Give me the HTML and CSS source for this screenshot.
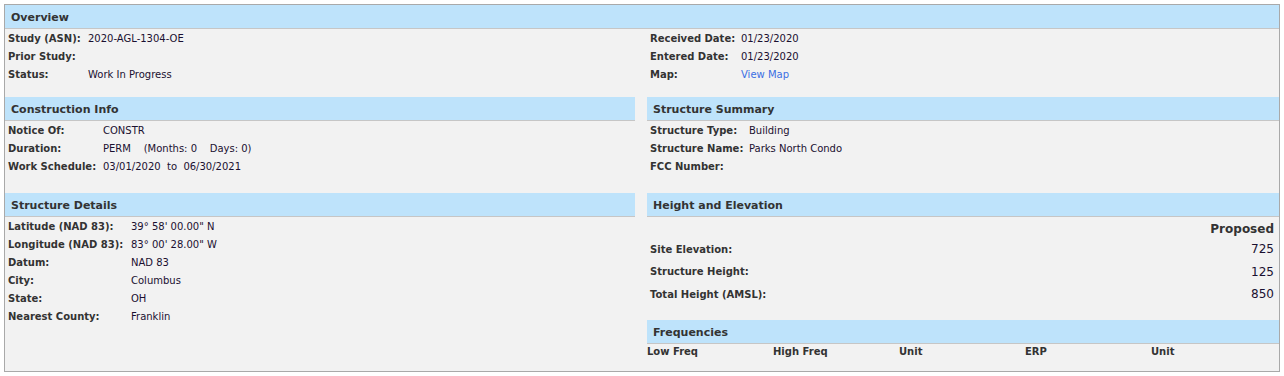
FILE: index.html
```html
<!DOCTYPE html>
<html>
<head>
<meta charset="utf-8">
<link rel="stylesheet" href="styles.css">
</head>
<body>
<div class="panel">
  <div class="hdr">Overview</div>
  <div class="overview">
    <div class="rows l80">
      <div class="row"><span class="lbl">Study (ASN):</span><span class="val">2020-AGL-1304-OE</span></div>
      <div class="row"><span class="lbl">Prior Study:</span><span class="val"></span></div>
      <div class="row"><span class="lbl">Status:</span><span class="val">Work In Progress</span></div>
    </div>
    <div class="rows l91">
      <div class="row"><span class="lbl">Received Date:</span><span class="val">01/23/2020</span></div>
      <div class="row"><span class="lbl">Entered Date:</span><span class="val">01/23/2020</span></div>
      <div class="row"><span class="lbl">Map:</span><span class="val"><a class="link" href="#">View Map</a></span></div>
    </div>
  </div>
  <div class="cols">
    <div class="col">
      <div class="hdr">Construction Info</div>
      <div class="rows l95 sec2">
        <div class="row"><span class="lbl">Notice Of:</span><span class="val">CONSTR</span></div>
        <div class="row"><span class="lbl">Duration:</span><span class="val">PERM &nbsp;&nbsp;&nbsp;(Months: 0 &nbsp;&nbsp;&nbsp;Days: 0)</span></div>
        <div class="row"><span class="lbl">Work Schedule:</span><span class="val">03/01/2020 &nbsp;to &nbsp;06/30/2021</span></div>
      </div>
      <div class="hdr">Structure Details</div>
      <div class="rows l123">
        <div class="row"><span class="lbl">Latitude (NAD 83):</span><span class="val">39° 58' 00.00" N</span></div>
        <div class="row"><span class="lbl">Longitude (NAD 83):</span><span class="val">83° 00' 28.00" W</span></div>
        <div class="row"><span class="lbl">Datum:</span><span class="val">NAD 83</span></div>
        <div class="row"><span class="lbl">City:</span><span class="val">Columbus</span></div>
        <div class="row"><span class="lbl">State:</span><span class="val">OH</span></div>
        <div class="row"><span class="lbl">Nearest County:</span><span class="val">Franklin</span></div>
      </div>
    </div>
    <div class="col">
      <div class="hdr">Structure Summary</div>
      <div class="rows l99 sec2">
        <div class="row"><span class="lbl">Structure Type:</span><span class="val">Building</span></div>
        <div class="row"><span class="lbl">Structure Name:</span><span class="val">Parks North Condo</span></div>
        <div class="row"><span class="lbl">FCC Number:</span><span class="val"></span></div>
      </div>
      <div class="hdr">Height and Elevation</div>
      <div class="heights">
        <div class="hrow head"><span></span><span class="prop">Proposed</span></div>
        <div class="hrow"><span class="lbl">Site Elevation:</span><span class="num">725</span></div>
        <div class="hrow"><span class="lbl">Structure Height:</span><span class="num">125</span></div>
        <div class="hrow"><span class="lbl">Total Height (AMSL):</span><span class="num">850</span></div>
      </div>
      <div class="hdr">Frequencies</div>
      <div class="freq">
        <span>Low Freq</span><span>High Freq</span><span>Unit</span><span>ERP</span><span>Unit</span>
      </div>
    </div>
  </div>
</div>
</body>
</html>
```

FILE: styles.css
```css
html, body {
  margin: 0;
  padding: 0;
  background: #ffffff;
}
body {
  padding: 4px;
  font-family: "DejaVu Sans", Verdana, sans-serif;
  font-size: 10px;
  color: #222;
}
.panel {
  width: 1274px;
  height: 366px;
  border: 1px solid #a9a9a9;
  background: #f2f2f2;
}
.hdr {
  height: 23px;
  line-height: 26px;
  background: #bee3fb;
  border-bottom: 1px solid #c6c6c6;
  padding-left: 6px;
  font-size: 11px;
  font-weight: bold;
  color: #333;
}
.overview {
  display: grid;
  grid-template-columns: 642px 1fr;
  height: 68px;
}
.rows {
  padding-left: 3px;
}
.row {
  display: flex;
  height: 18px;
  line-height: 20px;
}
.lbl {
  font-weight: bold;
  color: #333;
  flex: none;
}
.val {
  color: #1a1030;
}
.l80 .lbl { width: 80px; }
.l91 .lbl { width: 91px; }
.l95 .lbl { width: 95px; }
.l99 .lbl { width: 99px; }
.l123 .lbl { width: 123px; }
.link {
  color: #3b6fe3;
  text-decoration: none;
}
.cols {
  display: grid;
  grid-template-columns: 630px 632px;
  column-gap: 12px;
}
.sec2 {
  height: 72px;
}
.heights {
  padding: 4px 5px 0 3px;
  height: 99px;
}
.hrow {
  display: flex;
  justify-content: space-between;
  align-items: center;
  height: 22.5px;
}
.hrow.head {
  height: 15px;
  margin-bottom: 2px;
}
.prop {
  font-size: 12px;
  font-weight: bold;
  color: #333;
}
.num {
  font-size: 12px;
  color: #1a1030;
}
.freq {
  display: grid;
  grid-template-columns: repeat(5, 126px);
  font-weight: bold;
  color: #333;
  line-height: 16px;
}
```
